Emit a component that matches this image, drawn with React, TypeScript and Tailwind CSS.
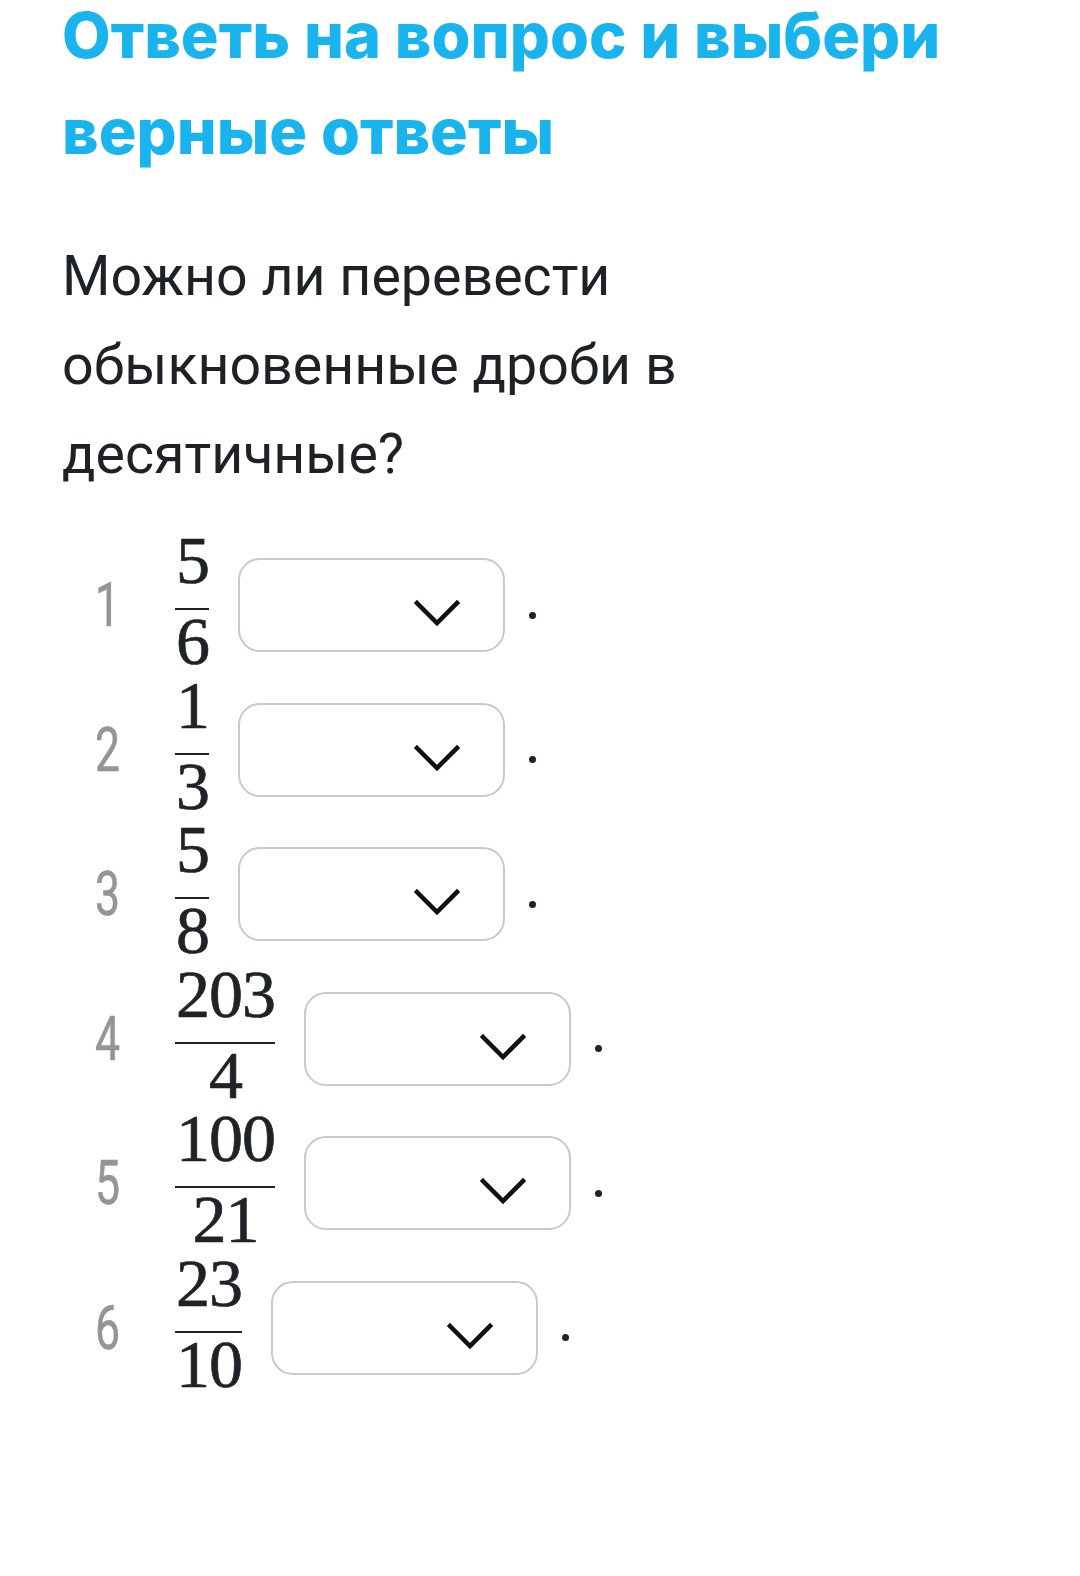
import React from 'react';

const rows = [
  { n: '1', top: '5', bottom: '6' },
  { n: '2', top: '1', bottom: '3' },
  { n: '3', top: '5', bottom: '8' },
  { n: '4', top: '203', bottom: '4' },
  { n: '5', top: '100', bottom: '21' },
  { n: '6', top: '23', bottom: '10' },
];

const Chevron = () => (
  <svg width="46" height="28" viewBox="0 0 46 28" fill="none">
    <path d="M3 4 L23 24 L43 4" stroke="#111" strokeWidth="4.5" strokeLinecap="square" />
  </svg>
);

const Fraction = ({ top, bottom }: { top: string; bottom: string }) => (
  <div className="inline-flex flex-col items-center font-['Liberation_Serif',serif] text-[68px] leading-[56px] tracking-[-1px] text-[#1f2327] [-webkit-text-stroke:0.7px_#1f2327]">
    <span className="mb-[20px] pl-[1px]">{top}</span>
    <span className="h-[2px] w-full bg-[#1f2327]" />
    <span className="mt-[3px] mb-[9px] pl-[1px]">{bottom}</span>
  </div>
);

const App = () => {
  return (
    <div className="min-h-[1576px] bg-white px-[62px] font-['Roboto',sans-serif]">
      <h1 className="flex flex-col gap-[26px] font-['Inter',sans-serif] text-[63px] font-extrabold leading-[70px] text-[#19b4ee]">
        <span>Ответь на вопрос и выбери</span>
        <span>верные ответы</span>
      </h1>
      <p className="mt-[66px] text-[55.5px] leading-[89px] text-[#1e2125]">
        Можно ли перевести
        <br />
        обыкновенные дроби в
        <br />
        десятичные?
      </p>
      <div className="mt-[34px] flex flex-col">
        {rows.map((r) => (
          <div key={r.n} className="flex h-[144.5px] items-center">
            <span className="w-[58px] origin-right scale-x-[0.72] text-right text-[62px] leading-none text-[#959595] [-webkit-text-stroke:0.6px_#959595]">
              {r.n}
            </span>
            <div className="ml-[55px]">
              <Fraction top={r.top} bottom={r.bottom} />
            </div>
            <div className="ml-[29px] flex h-[94px] w-[267px] items-center justify-end rounded-[22px] border-2 border-[#c9c9c9] pr-[43px]">
              <div className="mt-[16px]">
                <Chevron />
              </div>
            </div>
            <span className="ml-[24px] mt-[20px] h-[7px] w-[7px] rounded-full bg-[#1f2327]" />
          </div>
        ))}
      </div>
    </div>
  );
};

export default App;
